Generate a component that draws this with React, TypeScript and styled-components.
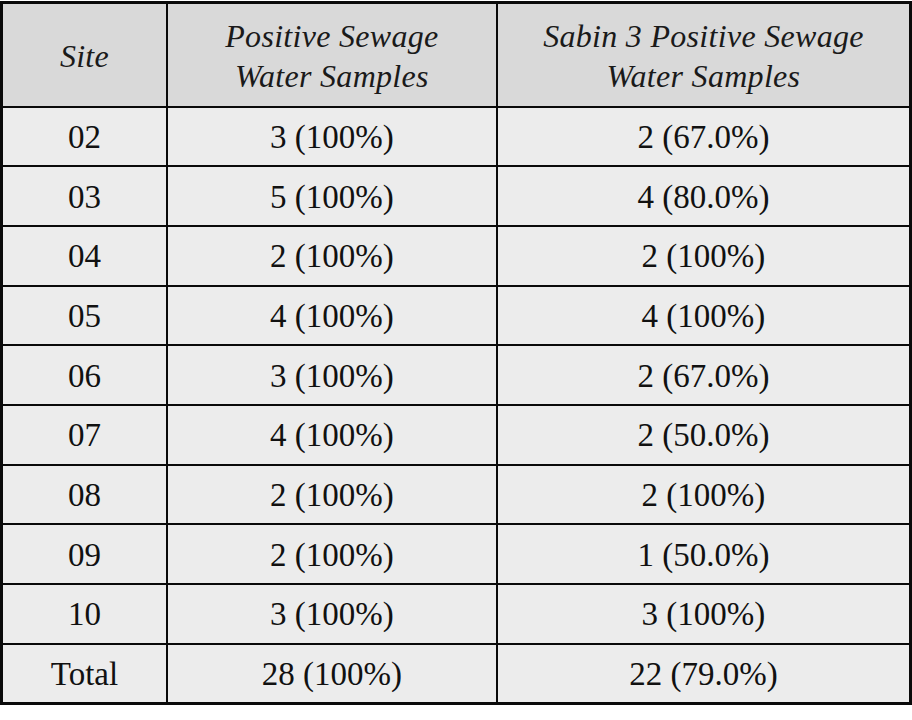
import React from "react";
import styled, { createGlobalStyle } from "styled-components";

const Global = createGlobalStyle`
  html, body { margin: 0; padding: 0; background: #ffffff; }
  body { font-family: "Liberation Serif", "Times New Roman", serif; color: #111; }
  *, *::before, *::after { box-sizing: border-box; }
`;

const Page = styled.div`
  padding-top: 1px;
  width: 912px;
`;

const Table = styled.table`
  width: 912px;
  border-collapse: collapse;
  border: 3px solid #0a0a0a;
  table-layout: fixed;
`;

const Col = styled.col<{ $w: string }>`
  width: ${(p) => p.$w};
`;

const HeadCell = styled.th`
  height: 104px;
  background: #d9d9d9;
  border: 2px solid #0a0a0a;
  font-weight: normal;
  font-style: italic;
  font-size: 32px;
  line-height: 40px;
  text-align: center;
  vertical-align: middle;
  padding: 2px 4px 0;
  letter-spacing: 0.3px;
  color: #1a1a1a;
`;

const Cell = styled.td`
  height: 59.7px;
  background: #ececec;
  border: 2px solid #0a0a0a;
  font-size: 33px;
  line-height: 40px;
  text-align: center;
  vertical-align: middle;
  padding: 1px 0 0;
  letter-spacing: 0;
`;

const rows: [string, string, string][] = [
  ["02", "3 (100%)", "2 (67.0%)"],
  ["03", "5 (100%)", "4 (80.0%)"],
  ["04", "2 (100%)", "2 (100%)"],
  ["05", "4 (100%)", "4 (100%)"],
  ["06", "3 (100%)", "2 (67.0%)"],
  ["07", "4 (100%)", "2 (50.0%)"],
  ["08", "2 (100%)", "2 (100%)"],
  ["09", "2 (100%)", "1 (50.0%)"],
  ["10", "3 (100%)", "3 (100%)"],
  ["Total", "28 (100%)", "22 (79.0%)"],
];

export default function App() {
  return (
    <Page>
      <Global />
      <Table>
        <colgroup>
          <Col $w="18.2%" />
          <Col $w="36.3%" />
          <Col $w="45.5%" />
        </colgroup>
        <thead>
          <tr>
            <HeadCell>Site</HeadCell>
            <HeadCell>
              Positive Sewage
              <br />
              Water Samples
            </HeadCell>
            <HeadCell>
              Sabin 3 Positive Sewage
              <br />
              Water Samples
            </HeadCell>
          </tr>
        </thead>
        <tbody>
          {rows.map((r) => (
            <tr key={r[0]}>
              <Cell>{r[0]}</Cell>
              <Cell>{r[1]}</Cell>
              <Cell>{r[2]}</Cell>
            </tr>
          ))}
        </tbody>
      </Table>
    </Page>
  );
}
